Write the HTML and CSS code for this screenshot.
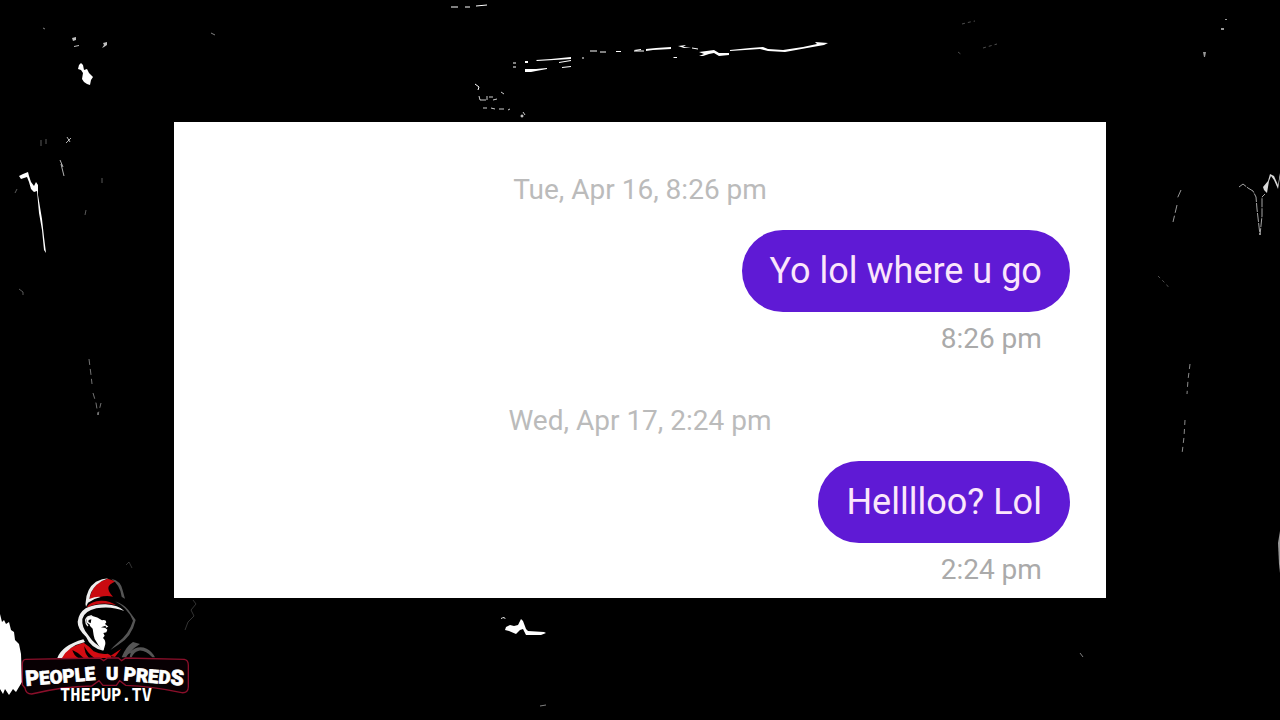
FILE: index.html
```html
<!DOCTYPE html>
<html lang="en">
<head>
    <meta charset="UTF-8">
    <meta name="viewport" content="width=device-width, initial-scale=1.0">
    <title>People U Preds</title>
    <link rel="stylesheet" href="styles.css">
</head>
<body>
    <!-- scratched film background -->
    <svg class="background" viewBox="0 0 1280 720" preserveAspectRatio="xMidYMid slice" aria-hidden="true">
        <g fill="#fff">
            <path d="M78 69l1-4 2-2 2 2 1 5 3-1 2 4 4 4-2 3-1 5-3-1-3-2-2-3 1-6-2-3z"/>
            <path d="M72 38l4-1v3l-3 1zM74 46l5-1v1l-5 1zM102 48l2-3-1-2 4-1v3l-3 2z" opacity=".75"/>
            <path d="M19 176l4-2 5-2 1 4 2 6 3 4 2-4 2 3v10l2 12 2 12 2 18 2 16-2-3-2-20-3-17-2-22-3 1-3-3-2-7-2-5-6 2z"/>
            <path d="M0 614l2 8 2-2 2 4 3-2 2 8 3 2 1 8 4 4 2 10 1 28-3 5-3 5-3-3-4 6-4-6-2 5-3-5z"/>
            <path d="M501 618l3-1 2 2-3-1-2 1zM506 627l4-2 4 1 4-1 3-6 2 2 3 8 2 2 16 1 2 1-5 2h-15l-3-6-3 1-4 4-7-3-4-1z"/>
            <path d="M699 52l15-2 5 3 10 0 0 2-10 1-5-3-5 1-6 2-4 0 5-2z"/>
            <path d="M730 50l20-2 13-1 5 2 15 1 20-3 14-3-2-2 13 1-4 2-17 3-22 4-17-1-8-2-30 2z"/>
            <path d="M525 69h11l11-1v1l-11 2-5 1h-6zM536 60l15-1 20-2v2l-34 2zM525 61h3v2h-3zM559 62l12-2v1l-12 2zM562 67l9-1v1l-9 1z"/>
            <path d="M646 49l10-1 15-1v2l-18 1-7 1zM634 50l7-1v1l-5 1zM616 51h5v1h-5zM678 46l8-1-3 2 8 0-7 1zM673 57h4v1h-3z"/>
            <path d="M1268 181l2-7 4 2 4 9 2-12v4l-2 12-4-9-3-4-2 5-2 12-3-3-1-3z" opacity=".85"/>
            <path d="M1203 52h3l-1 5h-1zM1221 28h3v2h-3zM1225 19h2v1h-2z" opacity=".6"/>
            <path d="M1278 543l2-12v42l-1-9z" opacity=".6"/>
        </g>
        <g fill="none" stroke="#fff">
            <path d="M451 7h7m7 0h5m6-1l11-1M475 84l4 3-1 3M513 63h3m-3 4h3m67-10v2M590 51h7m3 1h6m28-1h10M692 48l6 1"/>
            <path d="M479 96l1 4h6m1-4v4m2-3h4m0 3 4-1m4-7 3 2m-21 14h4m4 0l4 1m4 0h5m4 1 2-1m13 3 2 3" opacity=".8"/>
            <circle cx="522" cy="116" r="1"/>
            <path d="M60 160l3 7m-2 -3l3 12M67 137l3 5m-4 1l5-5" opacity=".7"/>
            <path d="M15 193l2-4M41 140v6m5-7v5M102 178v5M85 215l1-5M19 289l4 3v3" opacity=".35"/>
            <path d="M89 359l2 16 1 9m1 9l3 10 2 12 3-12" stroke-dasharray="6 4" opacity=".45"/>
            <path d="M1181 190l-4 9m0 6l-4 17" stroke-dasharray="8 3" opacity=".6"/>
            <path d="M1239 187l4-3 5 4 5 3 3 6 1 12 3 26 2-19v-19l3-3" stroke-dasharray="9 1" opacity=".65"/>
            <path d="M1190 364l-2 16-1 14m-2 26l-1 17-2 17" stroke-dasharray="5 4" opacity=".55"/>
            <path d="M1158 276l8 8 4 5M962 24l8-2 5-1M958 52l4 3m21-7l14-4" stroke-dasharray="3 3" opacity=".3"/>
            <path d="M193 600l3 4-5 6 3 6-6 6-3 8M126 565l3-3 3 6" opacity=".2"/>
            <path d="M211 33l4 2M1080 653l3 4M43 28l2 1M540 706l6-1" opacity=".5"/>
        </g>
    </svg>

    <main class="chat">
        <section class="day">
            <div class="date">Tue, Apr 16, 8:26 pm</div>
            <div class="bubble">Yo lol where u go</div>
            <div class="time">8:26 pm</div>
        </section>
        <section class="day">
            <div class="date">Wed, Apr 17, 2:24 pm</div>
            <div class="bubble">Helllloo? Lol</div>
            <div class="time">2:24 pm</div>
        </section>
    </main>

    <svg class="logo" viewBox="9 24 540 390" role="img" aria-label="People U Preds">
        <!-- hood -->
        <path fill="#000" d="M212 96Q225 35 280 26q45 8 50 60l32 65q-15 60-70 100h-40Q190 190 190 150z"/>
        <path fill="#c90a10" d="M222 90Q230 50 256 35l22-9 24 8q-22 10-22 20 0 12 14 26-20-4-40 1-20 4-32 9z"/>
        <path fill="#eee" d="M212 97Q214 55 243 35q18-9 37-10-22 7-36 20-18 18-21 42 20-8 34-6-22 5-38 17l-6 12q-3-6-1-13z"/>
        <path fill="#c90a10" d="M218 108q10-14 40-16 26-1 46 14-45-14-88 7z"/>
        <path fill="#eee" d="M188 155q3-26 24-40 28-13 60-12 38 2 56 20-40-16-84-8-36 8-42 32-3 25 18 49 18 28 46 40l-1 6q-38-8-52-42-26-24-25-45z"/>
        <path fill="#555" d="M289 26q29 6 34 35l7 25q-4-2-10-6-4-35-31-54zM300 94q28 10 40 26l22 30q-12 52-52 74l-24 16q10-12 22-22 34-26 46-66-16-38-54-58z"/>
        <!-- face -->
        <path fill="#fff" d="M232 138q15 3 29 13 12-3 13 6l-4 5 10 8-9 4 6 5-3 8-9 2 4 8-5 7q8 6 7 18l-5 18q-12-6-20-22-9-10-10-22l-3-20q-10-7-10-14-10-2-8-15 2-8 9-9l5-2z"/>
        <path fill="none" stroke="#eee" stroke-width="4" d="M232 139q-16-2-20 11 0 12 7 18"/>
        <path fill="#000" d="M272 167l-14 5 15 2zM221 150l8-2-2 12-7-4z"/>
        <!-- shoulders -->
        <path fill="#d30c12" d="M136 264q14-30 70-46 16 10 30 26 20 10 42 7 14 6 10 13H136z"/>
        <path fill="#000" d="M172 240q20 8 34 24h-16q-14-8-18-24zM208 228q8 20 30 36h-16q-14-14-14-36z"/>
        <path fill="#eee" d="M127 264q14-38 78-56l5 8q-50 12-69 48z"/>
        <path fill="#c90a10" d="M286 258l32-21-18 24z"/>
        <path fill="#555" d="M320 262q12-32 34-46l21 6q-20 12-32 26 24-24 52-12 16 8 25 26h-8q-20-22-40-20-14 2-22 20h-6l3-14q-8 2-14 14z"/>
        <!-- name plate -->
        <path fill="#080003" stroke="#8a0f2a" stroke-width="4" d="M32 268q100-2 222-4l12 8 12-8h32l10 8 12-8q90 2 176 4 12 2 12 18v64q0 20-20 18-90-20-168-22l-18-14-10 14h-40l-12-14-22 16q-90 2-180 24-18 0-20-18l-8-10v-60q0-16 10-16z"/>
        <text class="logo-name" x="33" y="348" transform="rotate(-5 33 348)"><tspan class="big">P</tspan>EOPLE</text>
        <text class="logo-name" x="273" y="329">U</text>
        <text class="logo-name" x="325" y="331" transform="rotate(5 325 331)">PRED<tspan class="big">S</tspan></text>
        <text class="logo-site" x="273" y="394">THEPUP.TV</text>
    </svg>
</body>
</html>
```
FILE: styles.css
```css
body, html {
    margin: 0;
    padding: 0;
    background: #000;
}
body {
    min-height: 100vh;
    display: flex;
    justify-content: center;
    align-items: center;
    position: relative;
    font-family: Roboto, "Liberation Sans", sans-serif;
}
.background {
    position: absolute;
    top: 0;
    left: 0;
    width: 100%;
    height: 100%;
}
.chat {
    position: relative;
    box-sizing: border-box;
    width: 72.8%;
    padding: 52px 36px 12px;
    display: flex;
    flex-direction: column;
    gap: 50px;
    background: #fff;
}
.day {
    display: flex;
    flex-direction: column;
    align-items: flex-end;
}
.date {
    align-self: center;
    margin-bottom: 24px;
    font-size: 28px;
    line-height: 32px;
    color: #bbb;
}
.bubble {
    padding: 20px 28px;
    border-radius: 42px;
    font-size: 36px;
    line-height: 42px;
    color: #fbe6fb;
    background: #5f1ad5;
}
.time {
    margin: 11px 28px 0;
    font-size: 28px;
    line-height: 32px;
    color: #aaa;
}
.logo {
    position: absolute;
    left: 18px;
    bottom: 12px;
    width: 180px;
    height: 130px;
}
.logo-name {
    font-family: Roboto, "Liberation Sans", sans-serif;
    font-size: 56px;
    font-weight: 900;
    fill: #fff;
    stroke: #fff;
    stroke-width: 2px;
}
.logo-name .big {
    font-size: 64px;
}
.logo-site {
    font-family: "DejaVu Sans Mono", monospace;
    font-size: 51px;
    font-weight: bold;
    text-anchor: middle;
    fill: #fff;
}
```
